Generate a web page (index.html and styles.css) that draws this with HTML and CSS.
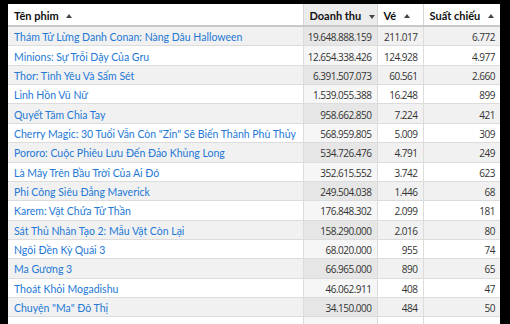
FILE: index.html
```html
<!DOCTYPE html>
<html lang="vi">
<head>
<meta charset="utf-8">
<link rel="stylesheet" href="styles.css">
</head>
<body>
<div class="frame">
<table class="films">
  <colgroup>
    <col class="c-title"><col class="c-rev"><col class="c-tix"><col class="c-show">
  </colgroup>
  <thead>
    <tr>
      <th class="th-left">Tên phim <span class="tri up"></span></th>
      <th class="sorted">Doanh thu <span class="tri down"></span></th>
      <th>Vé <span class="tri up"></span></th>
      <th>Suất chiếu <span class="tri up"></span></th>
    </tr>
  </thead>
  <tbody>
    <tr><td><a>Thám Tử Lừng Danh Conan: Nàng Dâu Halloween</a></td><td class="num rev">19.648.888.159</td><td class="num">211.017</td><td class="num">6.772</td></tr>
    <tr><td><a>Minions: Sự Trỗi Dậy Của Gru</a></td><td class="num rev">12.654.338.426</td><td class="num">124.928</td><td class="num">4.977</td></tr>
    <tr><td><a>Thor: Tình Yêu Và Sấm Sét</a></td><td class="num rev">6.391.507.073</td><td class="num">60.561</td><td class="num">2.660</td></tr>
    <tr><td><a>Linh Hồn Vũ Nữ</a></td><td class="num rev">1.539.055.388</td><td class="num">16.248</td><td class="num">899</td></tr>
    <tr><td><a>Quyết Tâm Chia Tay</a></td><td class="num rev">958.662.850</td><td class="num">7.224</td><td class="num">421</td></tr>
    <tr><td><a>Cherry Magic: 30 Tuổi Vẫn Còn "Zin" Sẽ Biến Thành Phù Thủy</a></td><td class="num rev">568.959.805</td><td class="num">5.009</td><td class="num">309</td></tr>
    <tr><td><a>Pororo: Cuộc Phiêu Lưu Đến Đảo Khủng Long</a></td><td class="num rev">534.726.476</td><td class="num">4.791</td><td class="num">249</td></tr>
    <tr><td><a>Là Mây Trên Bầu Trời Của Ai Đó</a></td><td class="num rev">352.615.552</td><td class="num">3.742</td><td class="num">623</td></tr>
    <tr><td><a>Phi Công Siêu Đẳng Maverick</a></td><td class="num rev">249.504.038</td><td class="num">1.446</td><td class="num">68</td></tr>
    <tr><td><a>Karem: Vật Chứa Tử Thần</a></td><td class="num rev">176.848.302</td><td class="num">2.099</td><td class="num">181</td></tr>
    <tr><td><a>Sát Thủ Nhân Tạo 2: Mẫu Vật Còn Lại</a></td><td class="num rev">158.290.000</td><td class="num">2.016</td><td class="num">80</td></tr>
    <tr><td><a>Ngôi Đền Kỳ Quái 3</a></td><td class="num rev">68.020.000</td><td class="num">955</td><td class="num">74</td></tr>
    <tr><td><a>Ma Gương 3</a></td><td class="num rev">66.965.000</td><td class="num">890</td><td class="num">65</td></tr>
    <tr><td><a>Thoát Khỏi Mogadishu</a></td><td class="num rev">46.062.911</td><td class="num">408</td><td class="num">47</td></tr>
    <tr><td><a>Chuyện "Ma" Đô Thị</a></td><td class="num rev">34.150.000</td><td class="num">484</td><td class="num">50</td></tr>
    <tr><td><a>&nbsp;</a></td><td class="num rev"></td><td class="num"></td><td class="num"></td></tr>
  </tbody>
</table>
</div>
</body>
</html>
```

FILE: styles.css
```css
html, body {
  margin: 0;
  padding: 0;
  background: #000;
  height: 324px;
  overflow: hidden;
}

.frame {
  padding: 4px 10px 0 8px;
}

.films {
  width: 492px;
  border-collapse: collapse;
  table-layout: fixed;
  background: #fff;
  font-family: "Lato", "Noto Sans", sans-serif;
  font-size: 10.5px;
  color: #222;
}

.c-title { width: 295px; }
.c-rev { width: 74px; }
.c-tix { width: 46px; }
.c-show { width: 77px; }

.films th {
  text-align: left;
  font-weight: 700;
  font-size: 11px;
  color: #111;
  padding: 1px 6px 0;
  height: 20px;
  border-left: 1px solid #d6d6d6;
  border-bottom: 2px solid #c8c8c8;
  white-space: nowrap;
}

.films th:first-child { border-left: none; }

.films th.sorted {
  background: #ececec;
}

.tri {
  display: inline-block;
  width: 0;
  height: 0;
  margin-left: 5px;
  vertical-align: middle;
  border-left: 3px solid transparent;
  border-right: 3px solid transparent;
}

.tri.up { border-bottom: 4px solid #444; position: relative; top: -1px; }
.tri.down { border-top: 4px solid #444; }

.films td {
  padding: 2px 6px 0;
  height: 16.36px;
  line-height: 14px;
  border-bottom: 1px solid #dcdcdc;
  border-left: 1px solid #dcdcdc;
  white-space: nowrap;
  overflow: hidden;
}

.films td:first-child { border-left: none; }

.films tbody tr:nth-child(odd) td { background: #f1f1f1; }
.films tbody tr:nth-child(odd) td.rev { background: #e6e6e6; }
.films tbody tr:nth-child(even) td.rev { background: #f6f6f6; }

.films td a {
  color: #2378d6;
  text-decoration: none;
}

.films td.num {
  text-align: right;
  font-family: "Open Sans", "Noto Sans", sans-serif;
  font-size: 10px;
  color: #333;
  padding-right: 5px;
  padding-left: 2px;
  letter-spacing: -0.5px;
}
```
